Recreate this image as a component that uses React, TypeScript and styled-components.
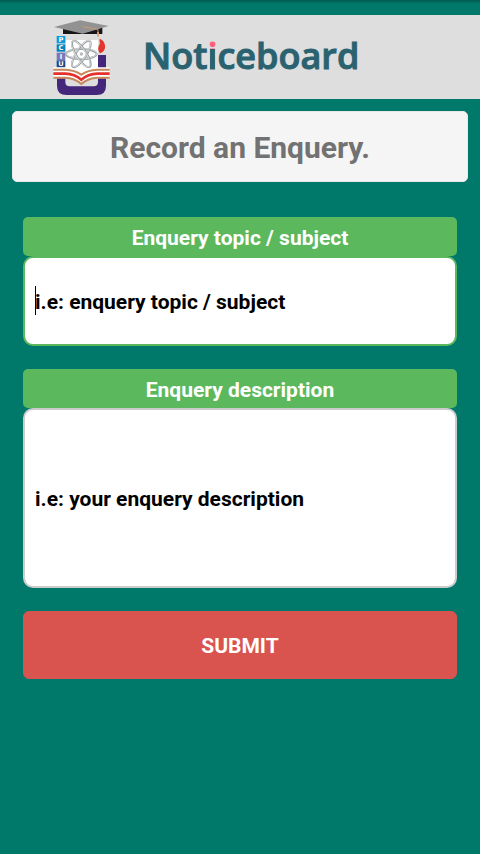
import React, { useState } from "react";
import styled, { createGlobalStyle } from "styled-components";

const GlobalStyle = createGlobalStyle`
  *, *::before, *::after { box-sizing: border-box; }
  body {
    margin: 0;
    background: #00796b;
    font-family: Roboto, sans-serif;
  }
`;

const Page = styled.div`
  min-height: 100vh;
  background: #00796b;
`;

const StatusStrip = styled.div`
  height: 15px;
  background: linear-gradient(#005a50, #00796b 4px);
`;

const Header = styled.header`
  display: flex;
  align-items: center;
  gap: 30px;
  height: 84px;
  padding-left: 50px;
  background: #dedede;
`;

const Crest = styled.svg`
  flex: none;
  width: 63px;
  height: 81px;
`;

const Wordmark = styled.div`
  padding-bottom: 2px;
  font-family: "Open Sans", sans-serif;
  font-size: 36px;
  font-weight: 600;
  font-variant-ligatures: none;
  line-height: 48px;
  color: #2b6270;
  -webkit-text-stroke: 1px #2b6270;
`;

const DottedLetter = styled.span`
  background: linear-gradient(#ff5c78 18px, #2b6270 18px);
  background-clip: text;
  -webkit-background-clip: text;
  -webkit-text-fill-color: transparent;
  -webkit-text-stroke-color: transparent;
`;

const TitleCard = styled.h1`
  margin: 12px 12px 0;
  padding: 18px 12px 16px;
  border: 1px solid #e8e8e8;
  border-radius: 5px;
  background: #f5f5f5;
  color: #727272;
  font-size: 30px;
  font-weight: 700;
  line-height: 35px;
  text-align: center;
`;

const Form = styled.form`
  display: flex;
  flex-direction: column;
  gap: 23px;
  padding: 35px 23px 24px;
`;

const Field = styled.div`
  display: flex;
  flex-direction: column;
`;

const FieldLabel = styled.label`
  padding: 9px 10px 6px;
  border-radius: 5px;
  background: #5cb85c;
  color: #fff;
  font-size: 21px;
  font-weight: 700;
  line-height: 24px;
  text-align: center;
`;

const EntryFrame = styled.div<{ $active?: boolean }>`
  position: relative;
  display: flex;
  border: 2px solid ${(p) => (p.$active ? "#5cb85c" : "#ccc")};
  border-radius: 10px;
  background: #fff;
`;

const entryText = `
  width: 100%;
  margin: 0;
  border: 0;
  outline: 0;
  background: transparent;
  color: #000;
  font-family: Roboto, sans-serif;
  font-size: 21px;
  font-weight: 700;
  line-height: 24px;
`;

const TopicInput = styled.input`
  ${entryText}
  height: 86px;
  padding: 2px 10px 0;
  &::placeholder { color: #000; opacity: 1; }
`;

const DescriptionInput = styled.textarea`
  ${entryText}
  display: block;
  height: 176px;
  padding: 77px 10px 75px;
  resize: none;
  overflow: hidden;
  &::placeholder { color: #000; opacity: 1; }
`;

const Caret = styled.span`
  position: absolute;
  left: 10px;
  top: 28px;
  width: 1px;
  height: 29px;
  background: #000;
`;

const SubmitButton = styled.button`
  padding: 22px 12px 20px;
  border: 1px solid #d9534f;
  border-radius: 6px;
  background: #d9534f;
  color: #fff;
  font-family: Roboto, sans-serif;
  font-size: 21px;
  font-weight: 700;
  line-height: 24px;
  text-transform: uppercase;
`;

const badges = [
  { letter: "P", y: 78, fill: "#0a9bd8" },
  { letter: "C", y: 103, fill: "#0782bb" },
  { letter: "I", y: 128, fill: "#7b78b8" },
  { letter: "U", y: 151, fill: "#1d4a8f" },
];

const orbits = [90, 33, -33];

function UniversityCrest() {
  return (
    <Crest viewBox="30 21 189 243" role="img" aria-label="PCIU">
      <path d="M78 90H174V178L124 204L74 178Z" fill="#fff" />
      <path d="M51 200V228Q51 255 80 255H170Q198 255 198 228V135H174V216Q174 229 161 229H89Q76 229 76 216V200Z" fill="#44277a" />
      <path d="M69 52V72H187V52L128 70Z" fill="#17151a" />
      <path d="M42 51L120 31L206 48L128 71Z" fill="#929292" />
      <path d="M128 50L174 58V79" fill="none" stroke="#c99a6b" strokeWidth="3" />
      <path d="M174 66V80" stroke="#dba577" strokeWidth="5" />
      <path d="M179 86C193 91 196 103 195 113C194 122 188 127 180 130C173 120 174 111 178 105C182 99 177 94 179 86Z" fill="#e5342b" />
      {badges.map((b) => (
        <g key={b.letter}>
          <rect x="50" y={b.y} width="26" height="22" fill={b.fill} />
          <text x="63" y={b.y + 18} fill="#fff" fontFamily="DejaVu Sans, sans-serif" fontSize="20" fontWeight="700" textAnchor="middle">
            {b.letter}
          </text>
        </g>
      ))}
      {orbits.map((angle) => (
        <g key={angle} fill="none" transform={`rotate(${angle} 124 132)`}>
          <ellipse cx="124" cy="132" rx="15" ry="46" stroke="#969c9f" strokeWidth="6" />
          <ellipse cx="123" cy="131" rx="15" ry="46" stroke="#d5d9da" strokeWidth="3" />
        </g>
      ))}
      <circle cx="124" cy="132" r="5" fill="#b5babc" />
      <path d="M40 172H76Q104 173 124 186Q144 173 172 172H209V205H174Q145 207 124 222Q103 207 75 205H40Z" fill="#fff" />
      <g fill="none">
        <path d="M40 179H76Q104 180 124 194Q144 180 172 179H209" stroke="#c68759" strokeWidth="6" />
        <path d="M40 191H76Q104 192 124 209Q144 192 172 191H209" stroke="#e5302c" strokeWidth="8" />
        <path d="M40 203H76Q104 204 124 222Q144 204 172 203H209" stroke="#c68759" strokeWidth="6" />
      </g>
    </Crest>
  );
}

export default function App() {
  const [topic, setTopic] = useState("");
  const [description, setDescription] = useState("");

  return (
    <Page>
      <GlobalStyle />
      <StatusStrip />
      <Header>
        <UniversityCrest />
        <Wordmark>
          Not<DottedLetter>i</DottedLetter>ceboard
        </Wordmark>
      </Header>
      <main>
        <TitleCard>Record an Enquery.</TitleCard>
        <Form onSubmit={(e) => e.preventDefault()}>
          <Field>
            <FieldLabel htmlFor="topic">Enquery topic / subject</FieldLabel>
            <EntryFrame $active>
              <TopicInput
                id="topic"
                type="text"
                placeholder="i.e: enquery topic / subject"
                value={topic}
                onChange={(e) => setTopic(e.target.value)}
              />
              {topic === "" && <Caret aria-hidden="true" />}
            </EntryFrame>
          </Field>
          <Field>
            <FieldLabel htmlFor="description">Enquery description</FieldLabel>
            <EntryFrame>
              <DescriptionInput
                id="description"
                placeholder="i.e: your enquery description"
                value={description}
                onChange={(e) => setDescription(e.target.value)}
              />
            </EntryFrame>
          </Field>
          <SubmitButton type="submit">Submit</SubmitButton>
        </Form>
      </main>
    </Page>
  );
}
